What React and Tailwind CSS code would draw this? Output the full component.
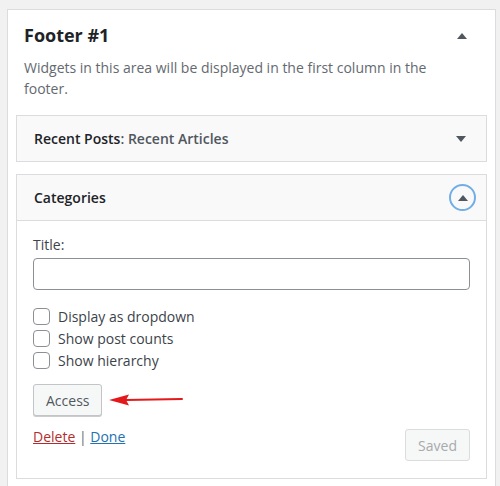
import React from 'react';

function Caret({ up = true }) {
  return (
    <svg width="10" height="6" viewBox="0 0 10 6" className="text-[#50575e]">
      {up ? <path d="M0 6 L5 0 L10 6 Z" fill="currentColor" /> : <path d="M0 0 L10 0 L5 6 Z" fill="currentColor" />}
    </svg>
  );
}

function Check({ label }) {
  return (
    <label className="flex items-center gap-2 h-[22px]">
      <span className="w-[17px] h-[17px] rounded-[4px] border border-[#8c8f94] bg-white" />
      <span className="text-[14px] text-[#3c434a]">{label}</span>
    </label>
  );
}

export default function App() {
  return (
    <div className="w-[500px] h-[486px] bg-[#f1f1f1] pt-[9px] pl-[7px] pr-[4px] overflow-hidden" style={{ fontFamily: '"Open Sans", "Noto Sans", sans-serif' }}>
      <div className="bg-white border border-[#dcdcde] h-[490px] pl-[8px] pr-[8px]">
        <div className="flex items-center justify-between pl-[8px] pr-[20px] pt-[12px]">
          <h2 className="text-[18px] font-bold text-[#1d2327]">Footer #1</h2>
          <Caret />
        </div>
        <p className="pl-[8px] pr-[60px] mt-[8px] text-[14px] leading-[21px] text-[#646970]">
          Widgets in this area will be displayed in the first column in the footer.
        </p>

        <div className="mt-[16px] border border-[#dcdcde] bg-[#f9f9f9] h-[47px] flex items-center justify-between pl-[17px] pr-[20px]">
          <div className="text-[14px] font-semibold text-[#1d2327]">
            Recent Posts<span className="text-[#50575e]">: Recent Articles</span>
          </div>
          <Caret up={false} />
        </div>

        <div className="mt-[12px] border border-[#dcdcde] bg-white h-[305px]">
          <div className="h-[46px] bg-[#f9f9f9] border-b border-[#dcdcde] flex items-center justify-between pl-[17px] pr-[10px]">
            <span className="text-[14px] font-semibold text-[#1d2327]">Categories</span>
            <span className="w-[27px] h-[27px] rounded-full border-2 border-[#72aee6] flex items-center justify-center">
              <Caret />
            </span>
          </div>
          <div className="px-[16px] pt-[14px]">
            <div className="text-[14px] text-[#3c434a] leading-[20px]">Title:</div>
            <div className="mt-[3px] h-[32px] border border-[#8c8f94] rounded-[4px] bg-white" />
            <div className="mt-[15px] flex flex-col">
              <Check label="Display as dropdown" />
              <Check label="Show post counts" />
              <Check label="Show hierarchy" />
            </div>
            <div className="mt-[13px] flex items-center gap-[7px]">
              <button className="h-[32px] px-[12px] border border-[#c3c4c7] rounded-[3px] bg-[#f6f7f7] text-[14px] text-[#50575e] shadow-[0_1px_0_#ccc]">Access</button>
              <svg width="74" height="14" viewBox="0 0 74 14">
                <path d="M0 7 L20 1.5 L17 7 L20 12.5 Z" fill="#e3191b" />
                <path d="M17 7 L73 6" stroke="#e3191b" strokeWidth="2" strokeLinecap="round" />
              </svg>
            </div>
            <div className="mt-[13px] flex justify-between items-start">
              <div className="text-[14px] mt-[-3px]">
                <a className="text-[#b32d2e] underline">Delete</a>
                <span className="text-[#646970]"> | </span>
                <a className="text-[#2271b1] underline">Done</a>
              </div>
              <button className="h-[32px] px-[12px] border border-[#dcdcde] rounded-[3px] bg-[#f6f7f7] text-[14px] text-[#a7aaad]">Saved</button>
            </div>
          </div>
        </div>
      </div>
    </div>
  );
}
